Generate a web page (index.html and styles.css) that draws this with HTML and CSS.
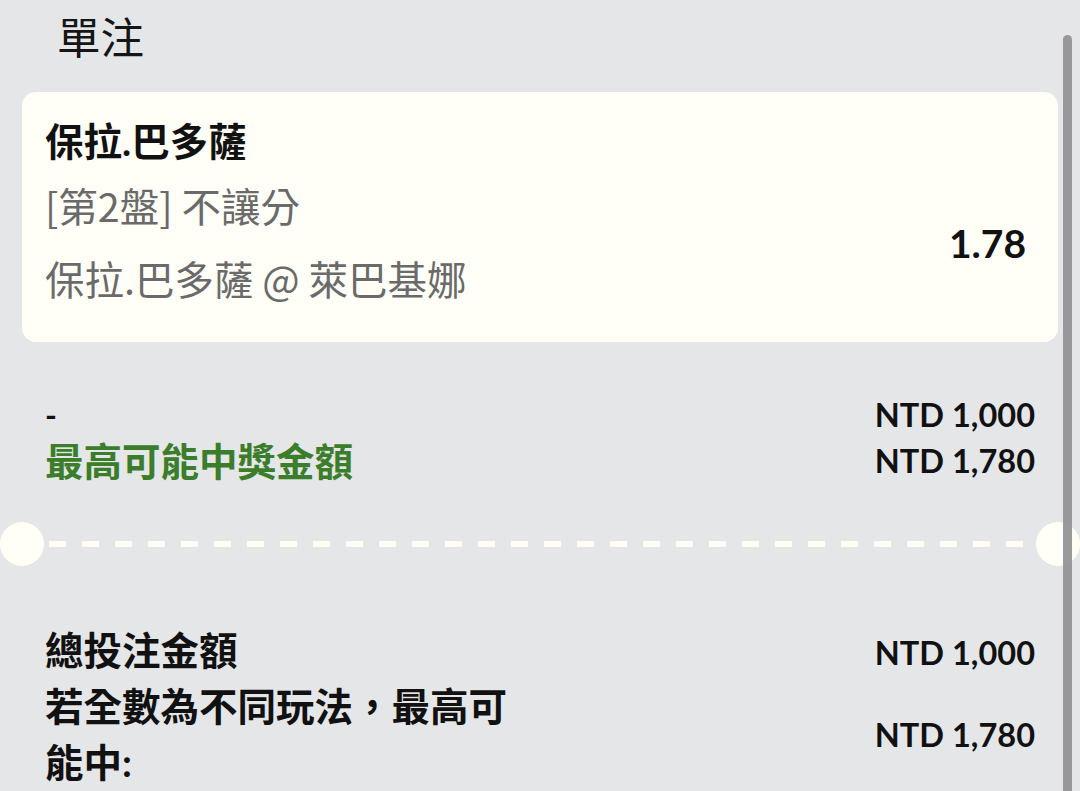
FILE: index.html
```html
<!DOCTYPE html>
<html lang="zh-Hant">
<head>
  <meta charset="UTF-8">
  <meta name="viewport" content="width=device-width, initial-scale=1.0">
  <title>單注</title>
  <link rel="stylesheet" href="styles.css">
</head>
<body>
  <div class="sheet">
    <h2 class="sheet-title">單注</h2>

    <div class="bet-card">
      <div class="bet-info">
        <div class="bet-name">保拉.巴多薩</div>
        <div class="bet-market">[第2盤] 不讓分</div>
        <div class="bet-event">保拉.巴多薩 @ 萊巴基娜</div>
      </div>
      <div class="bet-odds">1.78</div>
    </div>

    <div class="stake-row">
      <div class="stake-label">-</div>
      <div class="amount">NTD 1,000</div>
      <div class="stake-label win">最高可能中獎金額</div>
      <div class="amount">NTD 1,780</div>
    </div>

    <div class="divider">
      <span class="notch left"></span>
      <span class="dashes"></span>
      <span class="notch right"></span>
    </div>

    <div class="summary">
      <div class="summary-row">
        <div class="summary-label">總投注金額</div>
        <div class="amount">NTD 1,000</div>
      </div>
      <div class="summary-row center">
        <div class="summary-label">若全數為不同玩法，最高可能中:</div>
        <div class="amount">NTD 1,780</div>
      </div>
    </div>

    <div class="scroll-thumb"></div>
  </div>
</body>
</html>
```

FILE: styles.css
```css
html, body {
  margin: 0;
  height: 100%;
  overflow: hidden;
}
body {
  font-family: 'Lato', 'Noto Sans CJK TC', sans-serif;
  background: #e5e6e8;
  color: #111;
}
.sheet {
  position: relative;
  height: 100%;
  padding: 0 22px;
}
.sheet-title {
  margin: 0;
  padding: 8px 0 0 35px;
  font-family: 'Noto Sans CJK TC', sans-serif;
  font-size: 43.5px;
  font-weight: 400;
  line-height: 56px;
  color: #151515;
}
.bet-card {
  margin-top: 28px;
  height: 250px;
  box-sizing: border-box;
  padding: 24px 32px 0 23px;
  background: #fffef7;
  border-radius: 14px;
  display: flex;
}
.bet-info {
  flex: 1;
}
.bet-name {
  font-size: 38.5px;
  font-weight: 700;
  line-height: 50px;
}
.bet-market, .bet-event {
  font-family: 'Noto Sans CJK TC', sans-serif;
  font-size: 39.5px;
  line-height: 50px;
  color: #6a6a6a;
}
.bet-market {
  margin-top: 14px;
}
.bet-event {
  margin-top: 23px;
}
.bet-odds {
  margin-top: 102px;
  font-size: 39px;
  font-weight: 700;
  line-height: 50px;
}
.stake-row {
  display: grid;
  grid-template-columns: 1fr auto;
  padding: 50px 23px 0;
  line-height: 46px;
}
.stake-label {
  font-size: 32px;
  font-weight: 700;
}
.stake-label.win {
  font-size: 38.5px;
  color: #3b7d2b;
}
.amount {
  font-size: 32.5px;
  font-weight: 700;
  text-align: right;
  white-space: nowrap;
}
.divider {
  display: flex;
  align-items: center;
  margin: 38px -22px 0;
}
.notch {
  width: 44px;
  height: 44px;
  border-radius: 50%;
  background: #fffef7;
  flex: none;
}
.dashes {
  flex: 1;
  height: 6px;
  margin: 0 5px;
  background: repeating-linear-gradient(90deg, #fffef7 0 17px, transparent 17px 33px);
}
.summary {
  padding: 56px 23px 0;
}
.summary-row {
  display: flex;
  justify-content: space-between;
  align-items: baseline;
}
.summary-row.center {
  align-items: center;
}
.summary-label {
  width: 490px;
  font-size: 38.5px;
  font-weight: 700;
  line-height: 56px;
}
.scroll-thumb {
  position: absolute;
  top: 35px;
  right: 8px;
  bottom: 0;
  width: 9px;
  border-radius: 5px 5px 0 0;
  background: rgba(145, 145, 148, 0.92);
}
```
